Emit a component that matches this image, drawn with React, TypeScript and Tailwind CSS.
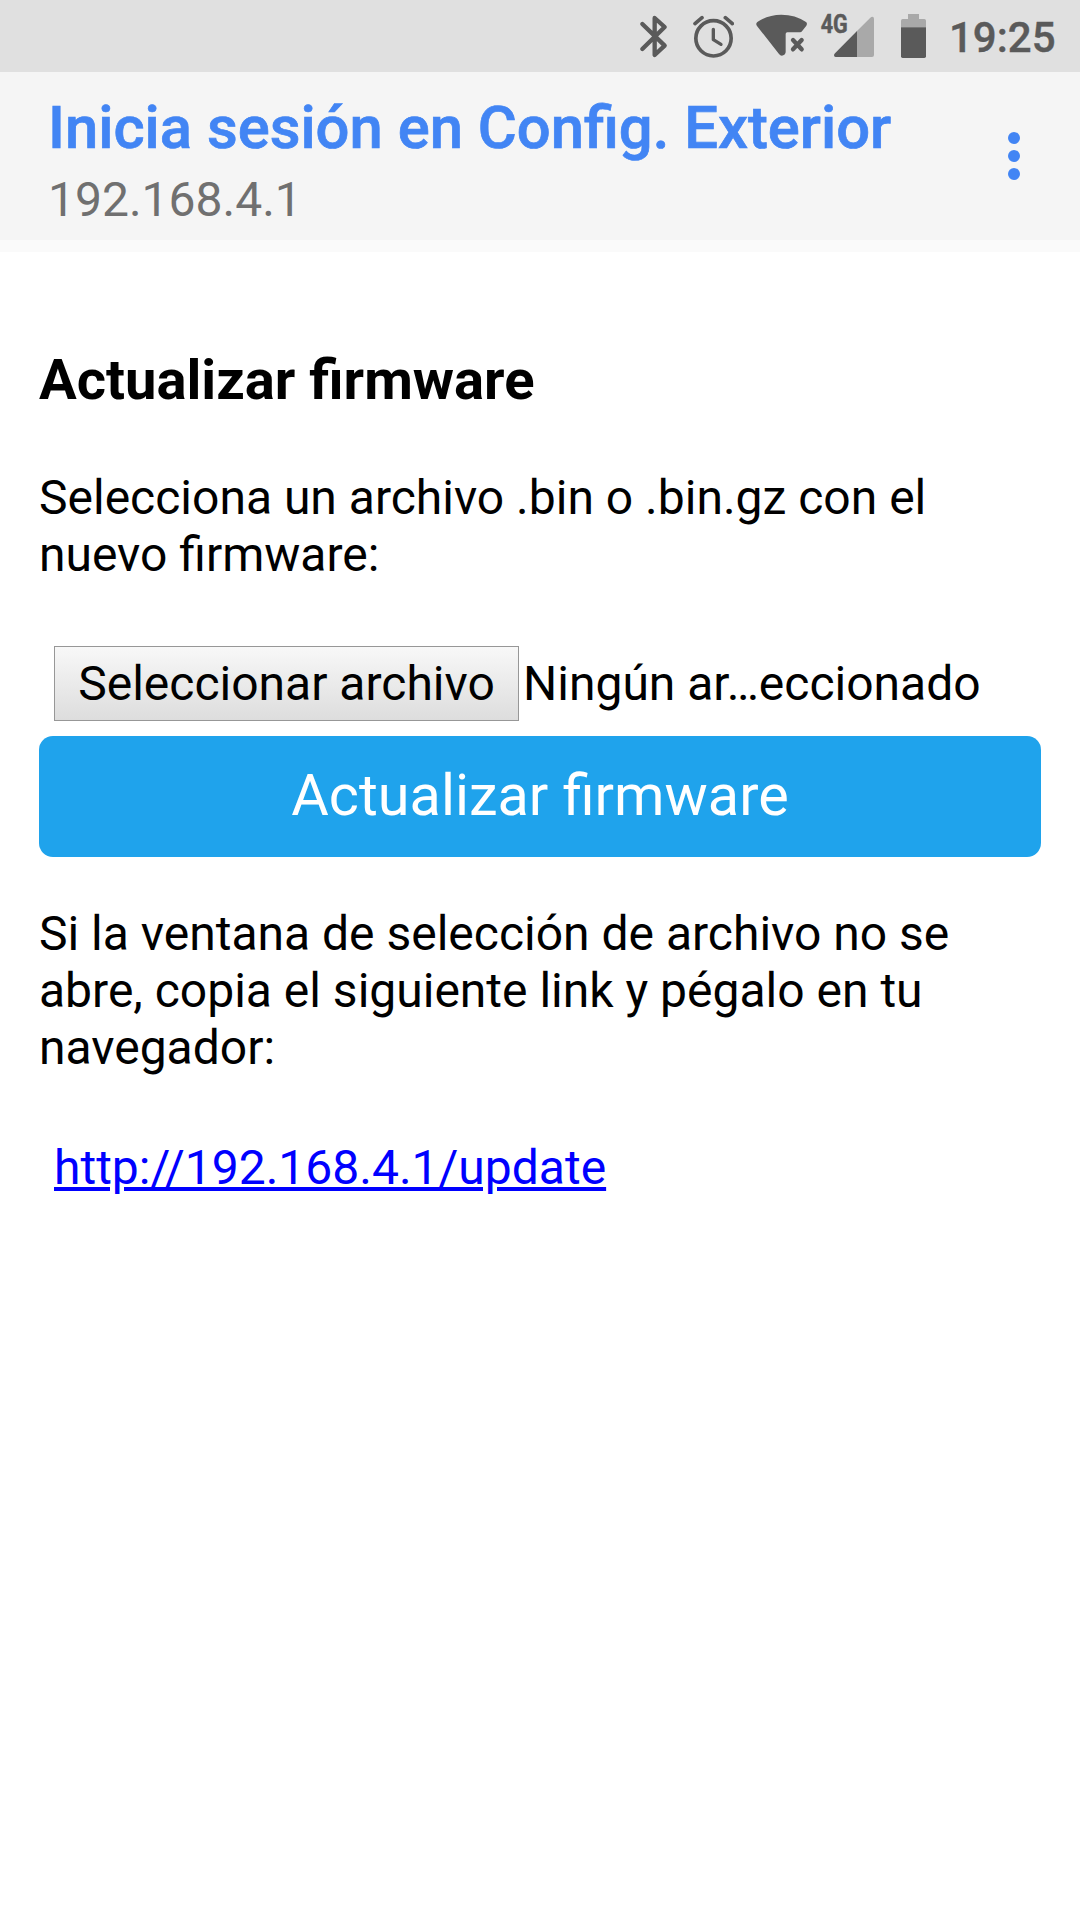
function BluetoothIcon() {
  return (
    <svg className="h-[72px] w-8 shrink-0" viewBox="54 0 96 216" fill="none" stroke="#5a5a5a" strokeWidth="13" strokeLinecap="round" strokeLinejoin="round">
      <path d="M67 72 L134 137 L104 165 V54 L134 81 L67 147" />
    </svg>
  );
}

function AlarmIcon() {
  return (
    <svg className="ml-[22px] h-[72px] w-[42px] shrink-0" viewBox="216 0 126 216" fill="none" stroke="#5a5a5a" strokeLinecap="round" strokeLinejoin="round">
      <circle cx="280.500" cy="115" r="53" strokeWidth="11" />
      <path d="M280 88 V119 L303 133" strokeWidth="10" />
      <path d="M225 71 L246 53 M316 53 L337 71" strokeWidth="11" />
    </svg>
  );
}

function WifiIcon() {
  return (
    <svg className="ml-[22px] h-[72px] w-[52px] shrink-0" viewBox="408 0 156 216" fill="#5a5a5a">
      <path d="M411 78 Q406 71 412 66 Q444 44 484 44 Q526 44 558 66 Q563 70 559 77 L546 94 Q544 97 540 97 H502 Q497 97 497 102 V157 Q496 164 490 166 Q482 169 477 162 Z" />
      <path d="M519 120 L545 148 M545 120 L519 148" fill="none" stroke="#5a5a5a" strokeWidth="13" strokeLinecap="round" />
    </svg>
  );
}

function SignalIcon() {
  return (
    <svg className="ml-[12px] h-[72px] w-[56px] shrink-0" viewBox="30 0 168 216">
      <path d="M141 93 L181 53 Q184 50 187 50 Q192 50 192 56 V165 Q192 171 186 171 H141 Z" fill="#a9a9a9" />
      <path d="M141 93 V171 H77 Q72 171 72 166 Q72 163 75 160 Z" fill="#5a5a5a" />
      <text x="32" y="100" textLength="81" lengthAdjust="spacingAndGlyphs" fontFamily="Roboto, sans-serif" fontWeight="700" fontSize="76" fill="#5a5a5a" stroke="#5a5a5a" strokeWidth="1.500">4G</text>
    </svg>
  );
}

function BatteryIcon() {
  return (
    <svg className="ml-[25px] h-[72px] w-[25px] shrink-0" viewBox="273 0 75 216">
      <path d="M294 42 H327 V57 H343 Q348 57 348 62 V82 H273 V62 Q273 57 278 57 H294 Z" fill="#a9a9a9" />
      <path d="M273 82 H348 V169 Q348 174 343 174 H278 Q273 174 273 169 Z" fill="#5a5a5a" />
    </svg>
  );
}

function StatusBar() {
  return (
    <div className="flex h-[72px] items-center justify-end bg-[#e0e0e0] pr-6">
      <BluetoothIcon />
      <AlarmIcon />
      <WifiIcon />
      <SignalIcon />
      <BatteryIcon />
      <span className="ml-[23px] w-[107px] whitespace-nowrap pt-[3px] text-[42px] leading-[50px] font-medium text-[#5a5a5a] [-webkit-text-stroke:0.4px_#5a5a5a]">19:25</span>
    </div>
  );
}

function Header() {
  return (
    <header className="flex h-[180px] items-center justify-between border-b-[12px] border-[#fafafa] bg-[#f5f5f5] pr-[60px] pl-12">
      <div className="flex h-full flex-col pt-[21px]">
        <h1 className="text-[59.75px] leading-[70px] font-medium whitespace-nowrap text-[#4285f4] [-webkit-text-stroke:0.7px_#4285f4]">Inicia sesión en Config. Exterior</h1>
        <p className="mt-[9px] text-[48px] leading-[56px] text-[#707070]">192.168.4.1</p>
      </div>
      <button className="flex w-3 flex-col gap-[6px]" aria-label="Más opciones">
        <span className="size-3 rounded-full bg-[#4285f4]" />
        <span className="size-3 rounded-full bg-[#4285f4]" />
        <span className="size-3 rounded-full bg-[#4285f4]" />
      </button>
    </header>
  );
}

export default function App() {
  return (
    <div className="h-[1920px] w-[1080px] overflow-hidden bg-white font-[Roboto,sans-serif] text-black">
      <StatusBar />
      <Header />
      <main className="px-[39px] pt-[95px] text-[48px] leading-[57px]">
        <h3 className="text-[56.16px] leading-[66px] font-bold">Actualizar firmware</h3>
        <p className="mt-14">
          Selecciona un archivo .bin o .bin.gz con el<br />nuevo firmware:
        </p>
        <div className="mt-[63px] ml-[15px] flex h-[75px] items-center whitespace-nowrap">
          <button className="h-[75px] w-[465px] border border-[#979797] bg-linear-to-b from-[#f8f8f8] to-[#dddddd] text-center">Seleccionar archivo</button>
          <span className="ml-1">Ningún ar…eccionado</span>
        </div>
        <button className="mt-[15px] block h-[121px] w-full rounded-[14px] bg-[#1fa3ec] pb-[2px] text-[57.6px] text-white">Actualizar firmware</button>
        <p className="mt-12">
          Si la ventana de selección de archivo no se<br />abre, copia el siguiente link y pégalo en tu<br />navegador:
        </p>
        <a href="#" className="mt-[63px] ml-[15px] inline-block text-[#0000ff] underline">http://192.168.4.1/update</a>
      </main>
    </div>
  );
}
